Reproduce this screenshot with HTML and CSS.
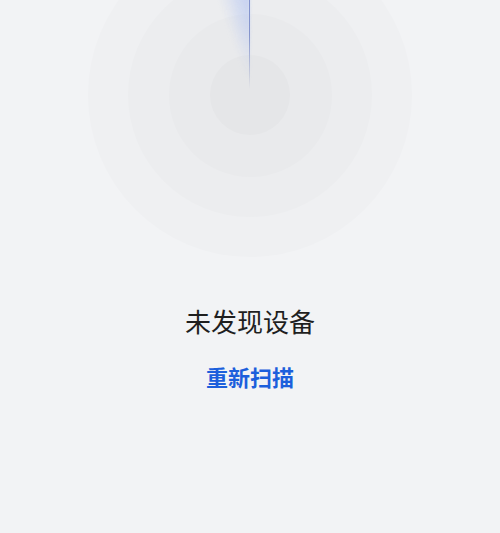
FILE: index.html
```html
<!DOCTYPE html>
<html>
	<head>
		<meta charset="UTF-8">
		<title>扫描设备</title>
		<link rel="stylesheet" href="styles.css">
	</head>
	<body>
		<div id="page">
			<div class="radar-box">
				<div class="radar">
					<div class="ring r1">
						<div class="ring r2">
							<div class="ring r3">
								<div class="ring r4"></div>
							</div>
						</div>
					</div>
					<div class="sweep"></div>
					<div class="needle"></div>
				</div>
			</div>
			<p class="empty">未发现设备</p>
			<p class="rescan">重新扫描</p>
		</div>
	</body>
</html>
```
FILE: styles.css
```css
*{margin: 0;padding: 0;}
html,body{height: 100%;}
body{
	background: #f2f3f5;
	font-family: "Noto Sans CJK SC", "Liberation Sans", sans-serif;
	overflow: hidden;
}
#page{
	display: flex;
	flex-direction: column;
	align-items: center;
}
.radar-box{
	width: 100%;
	height: 257px;
	overflow: hidden;
	display: flex;
	justify-content: center;
	align-items: flex-end;
}
.radar{
	width: 324px;
	height: 324px;
	flex-shrink: 0;
	position: relative;
}
.ring{
	border-radius: 50%;
	display: flex;
	justify-content: center;
	align-items: center;
}
.r1{width: 324px;height: 324px;background: #eff0f2;}
.r2{width: 244px;height: 244px;background: #ecedef;}
.r3{width: 163px;height: 163px;background: #e9eaec;}
.r4{width: 80px;height: 80px;background: #e5e6e8;}
.sweep{
	position: absolute;
	top: 0;
	left: 0;
	width: 324px;
	height: 324px;
	border-radius: 50%;
	background: conic-gradient(from -19deg at 50% 50%, rgba(170,190,245,0) 0deg, rgba(165,186,245,0.12) 5deg, rgba(155,180,245,0.3) 11deg, rgba(145,172,245,0.42) 18.5deg, rgba(145,172,245,0) 19deg);
	filter: blur(1.5px);
	-webkit-mask: radial-gradient(circle at 50% 50%, transparent 0, transparent 14px, rgba(0,0,0,0.2) 35px, rgba(0,0,0,0.75) 70px, #000 95px);
	mask: radial-gradient(circle at 50% 50%, transparent 0, transparent 14px, rgba(0,0,0,0.2) 35px, rgba(0,0,0,0.75) 70px, #000 95px);
}
.needle{
	position: absolute;
	top: 0;
	left: 161px;
	width: 1px;
	height: 156px;
	background: linear-gradient(to bottom, #7d8fcf 0, #8494cc 65%, rgba(190,195,215,0.6) 92%, rgba(190,195,215,0) 100%);
}
.empty{
	margin-top: 46px;
	font-size: 26px;
	line-height: 36px;
	color: #1f1f1f;
}
.rescan{
	margin-top: 22px;
	font-size: 22px;
	line-height: 30px;
	font-weight: bold;
	color: #1c5fdc;
	cursor: pointer;
}
```
